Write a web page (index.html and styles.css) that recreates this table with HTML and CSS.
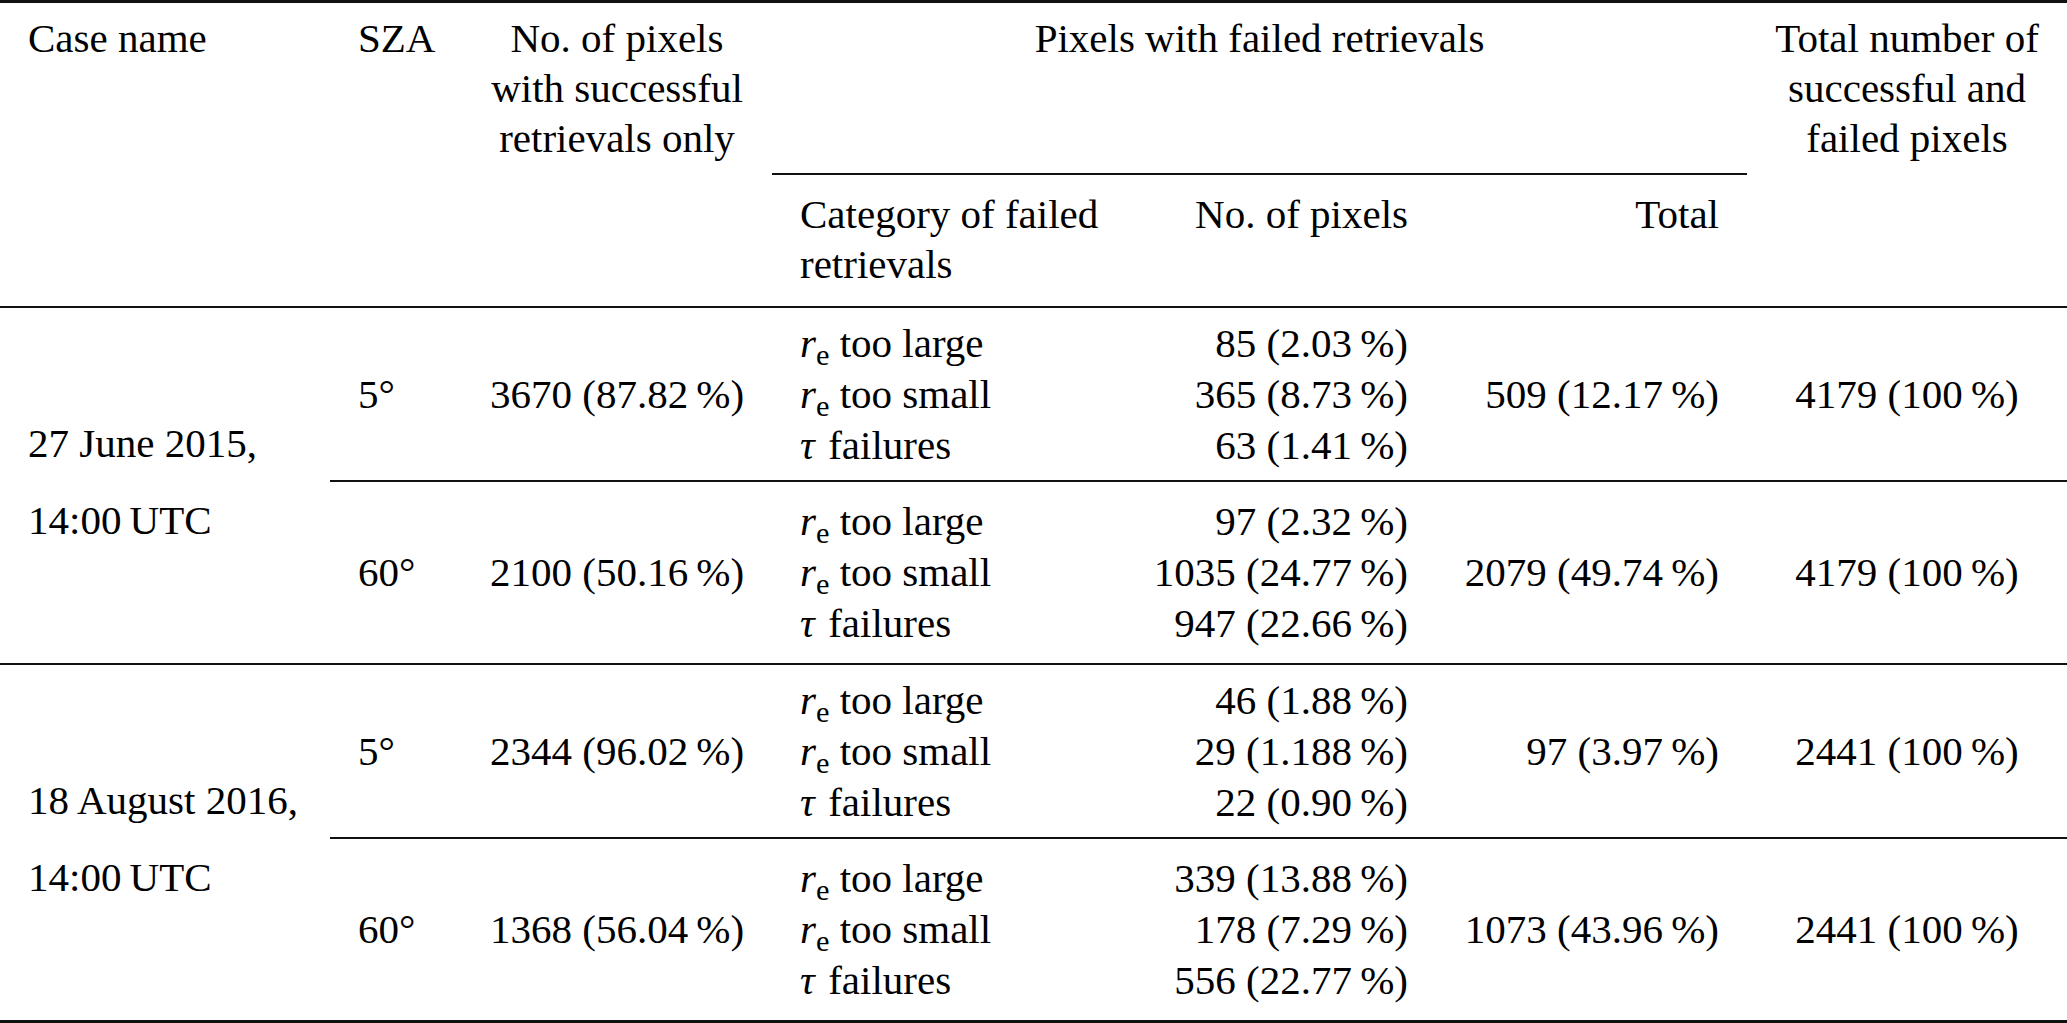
FILE: index.html
```html
<!DOCTYPE html>
<html lang="en">
<head>
<meta charset="utf-8">
<title>Retrieval statistics</title>
<link rel="stylesheet" href="styles.css">
</head>
<body>
<table class="results">
  <colgroup>
    <col class="w-case">
    <col class="w-sza">
    <col class="w-succ">
    <col class="w-cat">
    <col class="w-num">
    <col class="w-tot">
    <col class="w-all">
  </colgroup>
  <thead>
    <tr class="head-a">
      <th class="span left" rowspan="2">Case name</th>
      <th class="span left" rowspan="2">SZA</th>
      <th class="span center" rowspan="2">No. of pixels<br>with successful<br>retrievals only</th>
      <th class="c-failed center" colspan="3">Pixels with failed retrievals</th>
      <th class="span center" rowspan="2">Total number of<br>successful and<br>failed pixels</th>
    </tr>
    <tr class="head-b">
      <th class="left">Category of failed<br>retrievals</th>
      <th class="right">No. of pixels</th>
      <th class="right">Total</th>
    </tr>
  </thead>
  <tbody class="group">
    <tr class="row-a">
      <td class="case" rowspan="2">27 June 2015,<br>14:00&#8201;UTC</td>
      <td class="left">5°</td>
      <td class="center">3670 (87.82&#8201;%)</td>
      <td class="left"><i>r</i><span class="sub">e</span> too large<br><i>r</i><span class="sub">e</span> too small<br><i class="tau">τ</i> failures</td>
      <td class="right">85 (2.03&#8201;%)<br>365 (8.73&#8201;%)<br>63 (1.41&#8201;%)</td>
      <td class="right">509 (12.17&#8201;%)</td>
      <td class="center">4179 (100&#8201;%)</td>
    </tr>
    <tr class="row-b">
      <td class="left">60°</td>
      <td class="center">2100 (50.16&#8201;%)</td>
      <td class="left"><i>r</i><span class="sub">e</span> too large<br><i>r</i><span class="sub">e</span> too small<br><i class="tau">τ</i> failures</td>
      <td class="right">97 (2.32&#8201;%)<br>1035 (24.77&#8201;%)<br>947 (22.66&#8201;%)</td>
      <td class="right">2079 (49.74&#8201;%)</td>
      <td class="center">4179 (100&#8201;%)</td>
    </tr>
  </tbody>
  <tbody class="group last">
    <tr class="row-a">
      <td class="case" rowspan="2">18 August 2016,<br>14:00&#8201;UTC</td>
      <td class="left">5°</td>
      <td class="center">2344 (96.02&#8201;%)</td>
      <td class="left"><i>r</i><span class="sub">e</span> too large<br><i>r</i><span class="sub">e</span> too small<br><i class="tau">τ</i> failures</td>
      <td class="right">46 (1.88&#8201;%)<br>29 (1.188&#8201;%)<br>22 (0.90&#8201;%)</td>
      <td class="right">97 (3.97&#8201;%)</td>
      <td class="center">2441 (100&#8201;%)</td>
    </tr>
    <tr class="row-b">
      <td class="left">60°</td>
      <td class="center">1368 (56.04&#8201;%)</td>
      <td class="left"><i>r</i><span class="sub">e</span> too large<br><i>r</i><span class="sub">e</span> too small<br><i class="tau">τ</i> failures</td>
      <td class="right">339 (13.88&#8201;%)<br>178 (7.29&#8201;%)<br>556 (22.77&#8201;%)</td>
      <td class="right">1073 (43.96&#8201;%)</td>
      <td class="center">2441 (100&#8201;%)</td>
    </tr>
  </tbody>
</table>
</body>
</html>
```
FILE: styles.css
```css
html, body {
  margin: 0;
  padding: 0;
  background: #ffffff;
}

body {
  font-family: "Liberation Serif", "Times New Roman", serif;
  font-size: 41px;
  color: #000000;
}

.results {
  width: 2067px;
  table-layout: fixed;
  border-collapse: separate;
  border-spacing: 0;
}

.w-case { width: 330px; }
.w-sza  { width: 132px; }
.w-succ { width: 310px; }
.w-cat  { width: 353px; }
.w-num  { width: 311px; }
.w-tot  { width: 311px; }
.w-all  { width: 320px; }

th, td {
  padding: 0 28px;
  white-space: nowrap;
  font-weight: normal;
}

.left   { text-align: left; }
.center { text-align: center; }
.right  { text-align: right; }

/* header */
thead th {
  line-height: 50px;
  vertical-align: top;
}

.head-a th {
  border-top: 3px solid #111;
  padding-top: 10px;
}

.head-a th.span {
  border-bottom: 2px solid #111;
}

.head-a th.c-failed {
  padding-bottom: 110px;
  border-bottom: 2px solid #111;
}

.head-b th {
  padding-top: 14px;
  padding-bottom: 17px;
  border-bottom: 2px solid #111;
}

/* body */
tbody td {
  line-height: 51px;
  vertical-align: middle;
}

.row-a td {
  padding-top: 10px;
  padding-bottom: 9px;
  border-bottom: 2px solid #111;
}

.row-b td {
  padding-top: 14px;
  padding-bottom: 14px;
  border-bottom: 2px solid #111;
}

.row-a td.case {
  text-align: left;
  line-height: 77px;
  padding-top: 0;
  padding-bottom: 7px;
  border-bottom: 2px solid #111;
}

.last .row-b td,
.last .row-a td.case {
  border-bottom: 3px solid #111;
}

.sub {
  font-size: 0.74em;
  line-height: 0;
  vertical-align: -0.26em;
}

.tau {
  margin-right: 0.08em;
}
```
